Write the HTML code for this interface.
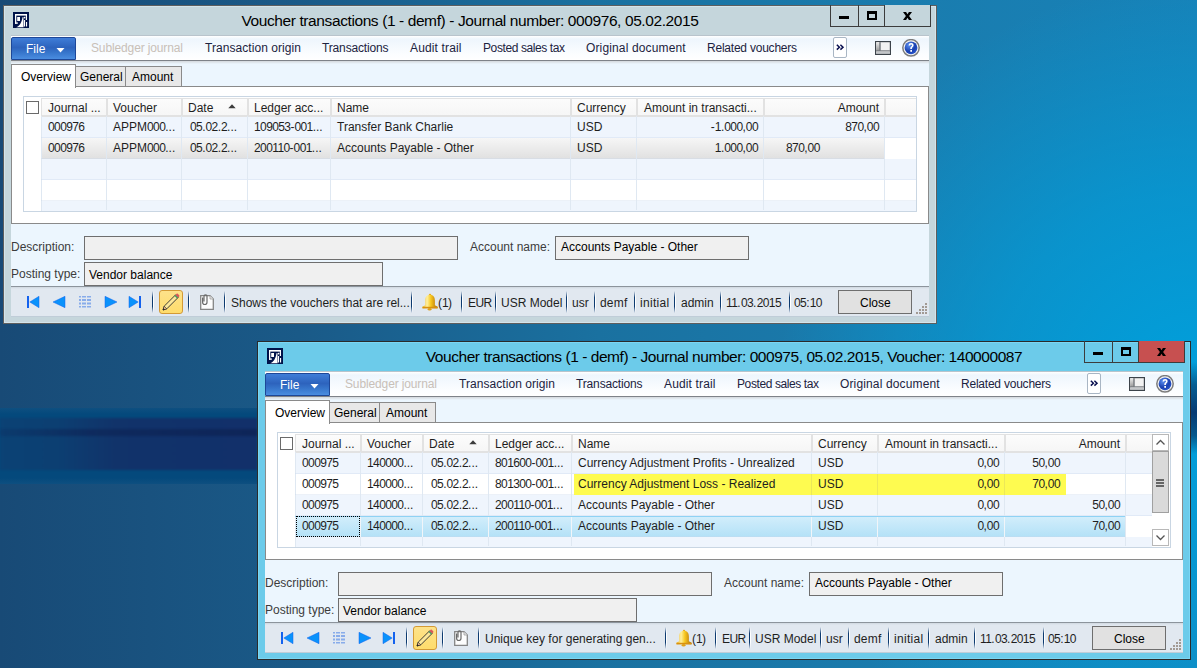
<!DOCTYPE html>
<html><head><meta charset="utf-8"><style>
html,body{margin:0;padding:0;}
body{width:1197px;height:668px;overflow:hidden;position:relative;font-family:"Liberation Sans", sans-serif;
background:radial-gradient(ellipse 420px 420px at 1197px 400px,rgba(0,160,220,1) 0%,rgba(0,160,220,0.6) 50%,rgba(0,160,220,0) 100%),linear-gradient(90deg,#184a76 0%,#1a5a88 25%,#1a71a0 50%,#1a7cae 75%,#1782b8 100%);}
.r{position:absolute;}
.t{position:absolute;white-space:nowrap;}
.d{letter-spacing:-0.6px;}
.win{position:absolute;width:1197px;height:668px;}
</style></head><body>
<div class="r" style="left:0px;top:408px;width:257px;height:76px;background:linear-gradient(#0e4f80 0%,#04497c 8%,#04497c 92%,#0e4f80 100%);"></div><div class="r" style="left:0px;top:418px;width:257px;height:52px;background:linear-gradient(90deg,#0b4275 0%,#0c3f72 22%,#11336a 45%,#12306a 100%);filter:blur(0.8px);"></div><div class="r" style="left:0px;top:429px;width:257px;height:7px;background:linear-gradient(90deg,rgba(12,50,100,0.4) 0%,rgba(14,38,88,0.7) 35%,rgba(14,36,86,0.85) 100%);filter:blur(1px);"></div><div class="r" style="left:1191px;top:362px;width:6px;height:92px;background:linear-gradient(rgba(6,60,110,0) 0%,rgba(6,70,120,0.75) 25%,#063a72 55%,rgba(6,70,120,0.8) 80%,rgba(6,60,110,0) 100%);"></div><div class="win" style="left:0px;top:0px">
<div class="r" style="left:3px;top:5px;width:934px;height:319px;background:#c5d6dc;box-sizing:border-box;border:1px solid #5e5e5e;box-shadow:inset 0 0 0 1px #d4e4ea;"></div>
<svg class="r" style="left:13px;top:12px" width="16" height="16" viewBox="0 0 16 16"><rect width="16" height="16" fill="#00134a"/><g fill="#fff"><rect x="2" y="2" width="12" height="1.6"/><rect x="2" y="2" width="1.3" height="9.8"/><rect x="2" y="10.4" width="2.8" height="1.4"/><rect x="12.8" y="2" width="1.2" height="6"/><rect x="4.2" y="5" width="2.8" height="4"/><path d="M3.2 15.2C6.5 14 8.6 11 9.6 5L10.4 5.4C10.6 9.5 10.6 12.5 10.6 15.2Z"/><circle cx="11.5" cy="5.6" r="0.9"/><rect x="11" y="8" width="1.1" height="6.5"/><rect x="13" y="10" width="1.1" height="4.5"/></g></svg>
<div class="t" style="left:3px;width:934px;text-align:center;top:12.88px;font-size:15.5px;line-height:15.5px;color:#000;letter-spacing:-0.4px;">Voucher transactions (1 - demf) - Journal number: 000976, 05.02.2015</div>
<div class="r" style="left:830px;top:5px;width:29px;height:22px;box-sizing:border-box;border:1px solid #3c3c3c;border-top:none;"></div>
<div class="r" style="left:858px;top:5px;width:27px;height:22px;box-sizing:border-box;border:1px solid #3c3c3c;border-top:none;border-left:none;"></div>
<div class="r" style="left:884px;top:5px;width:47px;height:22px;box-sizing:border-box;border:1px solid #3c3c3c;border-top:none;background:#c5d6dc;"></div>
<div class="r" style="left:839px;top:16px;width:10px;height:3px;background:#000;"></div>
<div class="r" style="left:867px;top:11px;width:10px;height:9px;box-sizing:border-box;border:2px solid #000;border-top-width:3px;"></div>
<svg class="r" style="left:903px;top:12px" width="9" height="8" viewBox="0 0 9 8"><path d="M0 0H3.1L4.5 2.3L5.9 0H9L6.1 4L9 8H5.9L4.5 5.7L3.1 8H0L2.9 4Z" fill="#000"/></svg>
<div class="r" style="left:11px;top:35px;width:918px;height:282px;background:#ecf6fe;"></div>
<div class="r" style="left:11px;top:316px;width:918px;height:1px;background:rgba(90,110,130,0.3);"></div>
<div class="r" style="left:11px;top:35px;width:918px;height:26px;background:linear-gradient(#ffffff 0px,#eef6fd 3px,#fbfdff 18px,#ffffff 100%);border-top:1px solid #b9c4cc;border-bottom:1px solid #7e8288;box-sizing:border-box;"></div>
<div class="r" style="left:11px;top:61px;width:918px;height:3px;background:linear-gradient(#d4d8dc,#ecf6fe);"></div>
<div class="r" style="left:11px;top:37px;width:65px;height:23px;background:linear-gradient(#3f7dd8 0%,#2d63bd 45%,#3776cc 70%,#4a8de0 100%);border:1px solid #1d4798;border-radius:2px 2px 0 0;box-sizing:border-box;"></div>
<div class="t" style="left:26px;top:42.84px;font-size:12px;line-height:12px;color:#fff;">File</div>
<svg class="r" style="left:56px;top:48px" width="9" height="5" viewBox="0 0 9 5"><path d="M0.5 0H8.5L4.5 4.5Z" fill="#fff"/></svg>
<div class="t" style="left:91px;top:41.84px;font-size:12px;line-height:12px;color:#c8c0b8;letter-spacing:-0.13px;">Subledger journal</div>
<div class="t" style="left:205px;top:41.84px;font-size:12px;line-height:12px;color:#1c2340;letter-spacing:0.06px;">Transaction origin</div>
<div class="t" style="left:322px;top:41.84px;font-size:12px;line-height:12px;color:#1c2340;letter-spacing:-0.15px;">Transactions</div>
<div class="t" style="left:410px;top:41.84px;font-size:12px;line-height:12px;color:#1c2340;letter-spacing:0.15px;">Audit trail</div>
<div class="t" style="left:483px;top:41.84px;font-size:12px;line-height:12px;color:#1c2340;letter-spacing:-0.4px;">Posted sales tax</div>
<div class="t" style="left:586px;top:41.84px;font-size:12px;line-height:12px;color:#1c2340;letter-spacing:0.14px;">Original document</div>
<div class="t" style="left:707px;top:41.84px;font-size:12px;line-height:12px;color:#1c2340;letter-spacing:-0.22px;">Related vouchers</div>
<div class="r" style="left:833px;top:37px;width:14px;height:21px;box-sizing:border-box;border:1px solid #a9b6c4;border-radius:2px;background:#fff;"></div>
<svg class="r" style="left:836px;top:44px" width="9" height="7" viewBox="0 0 9 7"><path d="M0.8 0.8L3.4 3.2L0.8 5.6M4.4 0.8L7 3.2L4.4 5.6" fill="none" stroke="#0a1050" stroke-width="1.5"/></svg>
<svg class="r" style="left:875px;top:41px" width="16" height="14" viewBox="0 0 16 14"><defs><linearGradient id="lg1a" x1="0" y1="0" x2="0" y2="1"><stop offset="0" stop-color="#ececec"/><stop offset="1" stop-color="#9a9a9a"/></linearGradient><linearGradient id="lg2a" x1="0" y1="0" x2="0" y2="1"><stop offset="0" stop-color="#d8dadc"/><stop offset="1" stop-color="#a8acb0"/></linearGradient></defs><rect x="0.6" y="0.6" width="14.8" height="12.8" fill="#f2f2f2" stroke="#3c434a" stroke-width="1.2"/><rect x="1.2" y="1.2" width="3.3" height="8.3" fill="url(#lg1a)"/><rect x="4.5" y="1.2" width="1" height="8.3" fill="#3c434a"/><rect x="1.2" y="9.5" width="13.6" height="1" fill="#3c434a"/><rect x="1.2" y="10.5" width="13.6" height="2.3" fill="url(#lg2a)"/></svg>
<svg class="r" style="left:902px;top:39px" width="18" height="18" viewBox="0 0 18 18"><defs><radialGradient id="hga" cx="0.35" cy="0.3" r="0.8"><stop offset="0" stop-color="#5a8ef0"/><stop offset="0.6" stop-color="#1a40b0"/><stop offset="1" stop-color="#2a58d0"/></radialGradient></defs><circle cx="9" cy="8.8" r="8.2" fill="#f4f4f4" stroke="#7c7c7c" stroke-width="1.5"/><circle cx="9" cy="8.8" r="6.4" fill="url(#hga)"/><path d="M6.6 6.6C6.6 4.9 7.7 4.1 9.1 4.1C10.6 4.1 11.6 5 11.6 6.3C11.6 7.8 10.1 8.1 9.9 9.4V10H8.3V9.2C8.4 7.5 10 7.3 10 6.3C10 5.7 9.6 5.4 9.1 5.4C8.5 5.4 8.2 5.8 8.2 6.6Z" fill="#fff"/><rect x="8.3" y="11" width="1.7" height="1.8" fill="#fff"/></svg>
<div class="r" style="left:11px;top:86px;width:918px;height:138px;background:#fff;box-sizing:border-box;border:1px solid #8a8a8a;"></div>
<div class="r" style="left:75px;top:66px;width:51px;height:21px;background:#e8e8e8;box-sizing:border-box;border:1px solid #8a8a8a;"></div>
<div class="r" style="left:125px;top:66px;width:57px;height:21px;background:#e8e8e8;box-sizing:border-box;border:1px solid #8a8a8a;"></div>
<div class="r" style="left:11px;top:64px;width:65px;height:24px;background:#fff;box-sizing:border-box;border:1px solid #8a8a8a;border-bottom:none;"></div>
<div class="t" style="left:21px;top:70.84px;font-size:12px;line-height:12px;color:#000;">Overview</div>
<div class="t" style="left:80px;top:70.84px;font-size:12px;line-height:12px;color:#000;">General</div>
<div class="t" style="left:132px;top:70.84px;font-size:12px;line-height:12px;color:#000;">Amount</div>
<div class="r" style="left:23px;top:96px;width:894px;height:116px;box-sizing:border-box;border:1px solid #c9d6e3;background:#fff;"></div>
<div class="r" style="left:41px;top:98px;width:875px;height:19px;background:linear-gradient(#fcfcfc,#f6f6f6);border-top:1px solid #e2e2e2;border-bottom:2px solid #e2e2e2;box-sizing:border-box;"></div>
<div class="r" style="left:26px;top:101px;width:13px;height:13px;box-sizing:border-box;border:1px solid #6a6a6a;background:#fff;"></div>
<div class="r" style="left:41px;top:117px;width:875px;height:21px;background:#eff5fd"></div>
<div class="r" style="left:41px;top:138px;width:875px;height:21px;background:linear-gradient(#f6f6f6,#e0e0e0)"></div>
<div class="r" style="left:41px;top:159px;width:875px;height:21px;background:#eff5fd"></div>
<div class="r" style="left:41px;top:180px;width:875px;height:21px;background:#fff"></div>
<div class="r" style="left:41px;top:201px;width:875px;height:10px;background:#eff5fd"></div>
<div class="r" style="left:41px;top:116px;width:1px;height:95px;background:#dfe8f2;"></div>
<div class="r" style="left:41px;top:137px;width:875px;height:1px;background:rgba(200,215,235,0.35);"></div>
<div class="r" style="left:41px;top:158px;width:875px;height:1px;background:rgba(200,215,235,0.35);"></div>
<div class="r" style="left:41px;top:179px;width:875px;height:1px;background:rgba(200,215,235,0.35);"></div>
<div class="r" style="left:41px;top:200px;width:875px;height:1px;background:rgba(200,215,235,0.35);"></div>
<div class="r" style="left:884px;top:138px;width:32px;height:21px;background:#fff;"></div>
<div class="r" style="left:106px;top:116px;width:1px;height:94px;background:#dfe8f2;"></div>
<div class="r" style="left:106px;top:98px;width:2px;height:18px;background:#e2e2e2;"></div>
<div class="r" style="left:181px;top:116px;width:1px;height:94px;background:#dfe8f2;"></div>
<div class="r" style="left:181px;top:98px;width:2px;height:18px;background:#e2e2e2;"></div>
<div class="r" style="left:247px;top:116px;width:1px;height:94px;background:#dfe8f2;"></div>
<div class="r" style="left:247px;top:98px;width:2px;height:18px;background:#e2e2e2;"></div>
<div class="r" style="left:330px;top:116px;width:1px;height:94px;background:#dfe8f2;"></div>
<div class="r" style="left:330px;top:98px;width:2px;height:18px;background:#e2e2e2;"></div>
<div class="r" style="left:570px;top:116px;width:1px;height:94px;background:#dfe8f2;"></div>
<div class="r" style="left:570px;top:98px;width:2px;height:18px;background:#e2e2e2;"></div>
<div class="r" style="left:636px;top:116px;width:1px;height:94px;background:#dfe8f2;"></div>
<div class="r" style="left:636px;top:98px;width:2px;height:18px;background:#e2e2e2;"></div>
<div class="r" style="left:763px;top:116px;width:1px;height:94px;background:#dfe8f2;"></div>
<div class="r" style="left:763px;top:98px;width:2px;height:18px;background:#e2e2e2;"></div>
<div class="r" style="left:884px;top:116px;width:1px;height:94px;background:#dfe8f2;"></div>
<div class="r" style="left:884px;top:98px;width:2px;height:18px;background:#e2e2e2;"></div>
<div class="r" style="left:41px;top:98px;width:1px;height:18px;background:#e2e2e2;"></div>
<div class="t" style="left:48px;top:101.84px;font-size:12px;line-height:12px;color:#1e1e1e;">Journal ...</div>
<div class="t" style="left:113px;top:101.84px;font-size:12px;line-height:12px;color:#1e1e1e;">Voucher</div>
<div class="t" style="left:188px;top:101.84px;font-size:12px;line-height:12px;color:#1e1e1e;">Date</div>
<div class="t" style="left:254px;top:101.84px;font-size:12px;line-height:12px;color:#1e1e1e;">Ledger acc...</div>
<div class="t" style="left:337px;top:101.84px;font-size:12px;line-height:12px;color:#1e1e1e;">Name</div>
<div class="t" style="left:577px;top:101.84px;font-size:12px;line-height:12px;color:#1e1e1e;">Currency</div>
<div class="t" style="left:644px;top:101.84px;font-size:12px;line-height:12px;color:#1e1e1e;">Amount in transacti...</div>
<div class="t" style="left:479px;width:400px;text-align:right;top:101.84px;font-size:12px;line-height:12px;color:#1e1e1e;">Amount</div>
<svg class="r" style="left:228px;top:104px" width="8" height="5" viewBox="0 0 8 5"><path d="M0.3 4.3L4 0.3L7.7 4.3Z" fill="#3c3c3c"/></svg>
<div class="t" style="left:48px;top:120.84px;font-size:12px;line-height:12px;color:#1e1e1e;"><span class="d">000976</span></div>
<div class="t" style="left:113px;top:120.84px;font-size:12px;line-height:12px;color:#1e1e1e;">APPM<span class="d">000</span>...</div>
<div class="t" style="left:190px;top:120.84px;font-size:12px;line-height:12px;color:#1e1e1e;"><span class="d">05</span>.<span class="d">02</span>.<span class="d">2</span>...</div>
<div class="t" style="left:254px;top:120.84px;font-size:12px;line-height:12px;color:#1e1e1e;"><span class="d">109053</span>-<span class="d">001</span>...</div>
<div class="t" style="left:337px;top:120.84px;font-size:12px;line-height:12px;color:#1e1e1e;">Transfer Bank Charlie</div>
<div class="t" style="left:577px;top:120.84px;font-size:12px;line-height:12px;color:#1e1e1e;">USD</div>
<div class="t" style="left:358px;width:400px;text-align:right;top:120.84px;font-size:12px;line-height:12px;color:#1e1e1e;">-<span class="d">1</span>.<span class="d">000</span>,<span class="d">00</span></div>
<div class="t" style="left:479px;width:400px;text-align:right;top:120.84px;font-size:12px;line-height:12px;color:#1e1e1e;"><span class="d">870</span>,<span class="d">00</span></div>
<div class="t" style="left:48px;top:141.84px;font-size:12px;line-height:12px;color:#1e1e1e;"><span class="d">000976</span></div>
<div class="t" style="left:113px;top:141.84px;font-size:12px;line-height:12px;color:#1e1e1e;">APPM<span class="d">000</span>...</div>
<div class="t" style="left:190px;top:141.84px;font-size:12px;line-height:12px;color:#1e1e1e;"><span class="d">05</span>.<span class="d">02</span>.<span class="d">2</span>...</div>
<div class="t" style="left:254px;top:141.84px;font-size:12px;line-height:12px;color:#1e1e1e;"><span class="d">200110</span>-<span class="d">001</span>...</div>
<div class="t" style="left:337px;top:141.84px;font-size:12px;line-height:12px;color:#1e1e1e;">Accounts Payable - Other</div>
<div class="t" style="left:577px;top:141.84px;font-size:12px;line-height:12px;color:#1e1e1e;">USD</div>
<div class="t" style="left:358px;width:400px;text-align:right;top:141.84px;font-size:12px;line-height:12px;color:#1e1e1e;"><span class="d">1</span>.<span class="d">000</span>,<span class="d">00</span></div>
<div class="t" style="left:786px;top:141.84px;font-size:12px;line-height:12px;color:#1e1e1e;"><span class="d">870</span>,<span class="d">00</span></div>
<div class="t" style="left:11px;top:240.84px;font-size:12px;line-height:12px;color:#3c3c3c;">Description:</div>
<div class="r" style="left:84px;top:236px;width:374px;height:24px;box-sizing:border-box;border:1px solid #6e6e6e;background:#f0f0f0;"></div>
<div class="t" style="left:11px;top:267.84px;font-size:12px;line-height:12px;color:#3c3c3c;">Posting type:</div>
<div class="r" style="left:84px;top:262px;width:299px;height:24px;box-sizing:border-box;border:1px solid #6e6e6e;background:#f0f0f0;"></div>
<div class="t" style="left:89px;top:268.84px;font-size:12px;line-height:12px;color:#000;">Vendor balance</div>
<div class="t" style="left:470px;top:240.84px;font-size:12px;line-height:12px;color:#3c3c3c;">Account name:</div>
<div class="r" style="left:555px;top:236px;width:194px;height:24px;box-sizing:border-box;border:1px solid #6e6e6e;background:#f0f0f0;"></div>
<div class="t" style="left:561px;top:240.84px;font-size:12px;line-height:12px;color:#000;">Accounts Payable - Other</div>
<div class="r" style="left:11px;top:286px;width:918px;height:30px;background:linear-gradient(#8c949c 0,#8c949c 1px,#d0d8e0 1px,#e1e8f0 3px,#e1e8f0 100%);"></div>
<svg class="r" style="left:27px;top:296px" width="115" height="13" viewBox="0 0 115 13"><rect x="0" y="0" width="2" height="12" fill="#1462ee"/><path d="M2.8 6L12 0.3V11.7Z" fill="#0a92fb" stroke="#1462ee" stroke-width="0.5"/><path d="M26 6L38 0.3V11.7Z" fill="#0a92fb" stroke="#1462ee" stroke-width="0.5"/><g fill="#88acea"><rect x="52" y="0" width="2" height="1.5"/><rect x="55" y="0" width="4" height="1.5"/><rect x="60" y="0" width="4" height="1.5"/><rect x="52" y="3" width="2" height="2"/><rect x="55" y="3" width="4" height="2"/><rect x="60" y="3" width="4" height="2"/><rect x="52" y="6.5" width="2" height="2"/><rect x="55" y="6.5" width="4" height="2"/><rect x="60" y="6.5" width="4" height="2"/><rect x="52" y="10" width="2" height="1.5"/><rect x="55" y="10" width="4" height="1.5"/><rect x="60" y="10" width="4" height="1.5"/></g><path d="M78 0.3L90 6L78 11.7Z" fill="#0a92fb" stroke="#1462ee" stroke-width="0.5"/><path d="M102 0.3L111.2 6L102 11.7Z" fill="#0a92fb" stroke="#1462ee" stroke-width="0.5"/><rect x="112" y="0" width="2" height="12" fill="#1462ee"/></svg>
<div class="r" style="left:152px;top:291px;width:1px;height:22px;background:linear-gradient(#e1e8f0,#0c3a70 30%,#0c3a70 70%,#e1e8f0);"></div>
<div class="r" style="left:153px;top:291px;width:1px;height:22px;background:linear-gradient(#e1e8f0,#ffffff 30%,#ffffff 70%,#e1e8f0);"></div>
<div class="r" style="left:188px;top:291px;width:1px;height:22px;background:linear-gradient(#e1e8f0,#0c3a70 30%,#0c3a70 70%,#e1e8f0);"></div>
<div class="r" style="left:189px;top:291px;width:1px;height:22px;background:linear-gradient(#e1e8f0,#ffffff 30%,#ffffff 70%,#e1e8f0);"></div>
<div class="r" style="left:224px;top:291px;width:1px;height:22px;background:linear-gradient(#e1e8f0,#0c3a70 30%,#0c3a70 70%,#e1e8f0);"></div>
<div class="r" style="left:225px;top:291px;width:1px;height:22px;background:linear-gradient(#e1e8f0,#ffffff 30%,#ffffff 70%,#e1e8f0);"></div>
<div class="r" style="left:411px;top:291px;width:1px;height:22px;background:linear-gradient(#e1e8f0,#0c3a70 30%,#0c3a70 70%,#e1e8f0);"></div>
<div class="r" style="left:412px;top:291px;width:1px;height:22px;background:linear-gradient(#e1e8f0,#ffffff 30%,#ffffff 70%,#e1e8f0);"></div>
<div class="r" style="left:461px;top:291px;width:1px;height:22px;background:linear-gradient(#e1e8f0,#0c3a70 30%,#0c3a70 70%,#e1e8f0);"></div>
<div class="r" style="left:462px;top:291px;width:1px;height:22px;background:linear-gradient(#e1e8f0,#ffffff 30%,#ffffff 70%,#e1e8f0);"></div>
<div class="r" style="left:494.5px;top:291px;width:1px;height:22px;background:linear-gradient(#e1e8f0,#0c3a70 30%,#0c3a70 70%,#e1e8f0);"></div>
<div class="r" style="left:495.5px;top:291px;width:1px;height:22px;background:linear-gradient(#e1e8f0,#ffffff 30%,#ffffff 70%,#e1e8f0);"></div>
<div class="r" style="left:565.5px;top:291px;width:1px;height:22px;background:linear-gradient(#e1e8f0,#0c3a70 30%,#0c3a70 70%,#e1e8f0);"></div>
<div class="r" style="left:566.5px;top:291px;width:1px;height:22px;background:linear-gradient(#e1e8f0,#ffffff 30%,#ffffff 70%,#e1e8f0);"></div>
<div class="r" style="left:593.5px;top:291px;width:1px;height:22px;background:linear-gradient(#e1e8f0,#0c3a70 30%,#0c3a70 70%,#e1e8f0);"></div>
<div class="r" style="left:594.5px;top:291px;width:1px;height:22px;background:linear-gradient(#e1e8f0,#ffffff 30%,#ffffff 70%,#e1e8f0);"></div>
<div class="r" style="left:633.5px;top:291px;width:1px;height:22px;background:linear-gradient(#e1e8f0,#0c3a70 30%,#0c3a70 70%,#e1e8f0);"></div>
<div class="r" style="left:634.5px;top:291px;width:1px;height:22px;background:linear-gradient(#e1e8f0,#ffffff 30%,#ffffff 70%,#e1e8f0);"></div>
<div class="r" style="left:673.5px;top:291px;width:1px;height:22px;background:linear-gradient(#e1e8f0,#0c3a70 30%,#0c3a70 70%,#e1e8f0);"></div>
<div class="r" style="left:674.5px;top:291px;width:1px;height:22px;background:linear-gradient(#e1e8f0,#ffffff 30%,#ffffff 70%,#e1e8f0);"></div>
<div class="r" style="left:719.5px;top:291px;width:1px;height:22px;background:linear-gradient(#e1e8f0,#0c3a70 30%,#0c3a70 70%,#e1e8f0);"></div>
<div class="r" style="left:720.5px;top:291px;width:1px;height:22px;background:linear-gradient(#e1e8f0,#ffffff 30%,#ffffff 70%,#e1e8f0);"></div>
<div class="r" style="left:788.5px;top:291px;width:1px;height:22px;background:linear-gradient(#e1e8f0,#0c3a70 30%,#0c3a70 70%,#e1e8f0);"></div>
<div class="r" style="left:789.5px;top:291px;width:1px;height:22px;background:linear-gradient(#e1e8f0,#ffffff 30%,#ffffff 70%,#e1e8f0);"></div>
<div class="r" style="left:159px;top:290px;width:24px;height:24px;box-sizing:border-box;border:1.5px solid #d39a35;border-radius:3px;background:linear-gradient(#fde28a,#fedc6c);"></div>
<svg class="r" style="left:159px;top:290px" width="24" height="24" viewBox="0 0 24 24"><path d="M4 20L5.2 16.2L16.5 4.9L19.1 7.5L7.8 18.8Z" fill="#fbe79a" stroke="#2a2a2a" stroke-width="0.9"/><path d="M4 20L5.2 16.2L7.8 18.8Z" fill="#f0c090" stroke="#2a2a2a" stroke-width="0.6"/><path d="M4 20L4.6 18.2L5.8 19.4Z" fill="#111"/><path d="M15.5 5.9L18.1 8.5L19.1 7.5L16.5 4.9Z" fill="#40a060"/><path d="M16.5 4.9L19.1 7.5L20.2 6.4C20.5 6 20.5 5.5 20.1 5.1L18.9 3.9C18.5 3.5 18 3.5 17.6 3.8Z" fill="#d85a5a"/></svg>
<svg class="r" style="left:199px;top:293px" width="16" height="18" viewBox="0 0 16 18"><path d="M1.7 2.7H11L14.3 6V16.3H1.7Z" fill="#fdfdfd" stroke="#858585" stroke-width="1.3"/><path d="M11 2.7V6H14.3" fill="#e8e8e8" stroke="#a0a0a0" stroke-width="0.8"/><path d="M3.6 4.5V9.3A2.2 2.2 0 0 0 8 9.3V3.3A1.5 1.5 0 0 0 5 3.3V8.5" fill="none" stroke="#6a6a6a" stroke-width="1.2"/></svg>
<div class="t" style="left:231px;top:296.84px;font-size:12px;line-height:12px;color:#1e1e1e;">Shows the vouchers that are rel...</div>
<svg class="r" style="left:421px;top:293px" width="18" height="18" viewBox="0 0 18 18"><defs><linearGradient id="bg1a" x1="0" y1="0" x2="1" y2="0"><stop offset="0" stop-color="#f0b010"/><stop offset="0.3" stop-color="#fff0a0"/><stop offset="0.55" stop-color="#f8c820"/><stop offset="1" stop-color="#b06a08"/></linearGradient></defs><circle cx="9" cy="1.9" r="1.1" fill="#e0a010"/><path d="M9 1.8C5.6 1.8 4.2 4.2 4.2 7.8V12.2L1.5 13.8V15.3H16.6V13.8L13.9 12.2V7.8C13.9 4.2 12.4 1.8 9 1.8Z" fill="url(#bg1a)"/><rect x="1.5" y="13.8" width="15.1" height="1.6" fill="#d89010"/><ellipse cx="8.6" cy="16.3" rx="1.9" ry="1.2" fill="#e0a018"/></svg>
<div class="t" style="left:438px;top:296.84px;font-size:12px;line-height:12px;color:#1e1e1e;">(<span class="d">1</span>)</div>
<div class="t" style="left:468px;top:296.84px;font-size:12px;line-height:12px;color:#1e1e1e;letter-spacing:-0.6px;">EUR</div>
<div class="t" style="left:501px;top:296.84px;font-size:12px;line-height:12px;color:#1e1e1e;letter-spacing:0px;">USR Model</div>
<div class="t" style="left:572px;top:296.84px;font-size:12px;line-height:12px;color:#1e1e1e;letter-spacing:0px;">usr</div>
<div class="t" style="left:600px;top:296.84px;font-size:12px;line-height:12px;color:#1e1e1e;letter-spacing:0.2px;">demf</div>
<div class="t" style="left:640px;top:296.84px;font-size:12px;line-height:12px;color:#1e1e1e;letter-spacing:0.3px;">initial</div>
<div class="t" style="left:681px;top:296.84px;font-size:12px;line-height:12px;color:#1e1e1e;letter-spacing:0px;">admin</div>
<div class="t" style="left:726px;top:296.84px;font-size:12px;line-height:12px;color:#1e1e1e;letter-spacing:0.3px;"><span class="d">11</span>.<span class="d">03</span>.<span class="d">2015</span></div>
<div class="t" style="left:794px;top:296.84px;font-size:12px;line-height:12px;color:#1e1e1e;letter-spacing:0.3px;"><span class="d">05</span>:<span class="d">10</span></div>
<div class="r" style="left:838px;top:290px;width:74px;height:24px;box-sizing:border-box;border:1px solid #6e6e6e;background:#e1e1e1;"></div>
<div class="t" style="left:860px;top:296.84px;font-size:12px;line-height:12px;color:#000;">Close</div>
<svg class="r" style="left:916px;top:303px" width="11" height="11" viewBox="0 0 11 11"><g fill="#a29a94"><rect x="9" y="0" width="2" height="2"/><rect x="6" y="3" width="2" height="2"/><rect x="9" y="3" width="2" height="2"/><rect x="3" y="6" width="2" height="2"/><rect x="6" y="6" width="2" height="2"/><rect x="9" y="6" width="2" height="2"/><rect x="0" y="9" width="2" height="2"/><rect x="3" y="9" width="2" height="2"/><rect x="6" y="9" width="2" height="2"/><rect x="9" y="9" width="2" height="2"/></g></svg>
</div><div class="win" style="left:254px;top:336px">
<div class="r" style="left:3px;top:5px;width:934px;height:319px;background:#6ccbea;box-sizing:border-box;border:1px solid #2a2a2a;box-shadow:inset 0 0 0 1px #7ad6f4;"></div>
<svg class="r" style="left:13px;top:12px" width="16" height="16" viewBox="0 0 16 16"><rect width="16" height="16" fill="#00134a"/><g fill="#fff"><rect x="2" y="2" width="12" height="1.6"/><rect x="2" y="2" width="1.3" height="9.8"/><rect x="2" y="10.4" width="2.8" height="1.4"/><rect x="12.8" y="2" width="1.2" height="6"/><rect x="4.2" y="5" width="2.8" height="4"/><path d="M3.2 15.2C6.5 14 8.6 11 9.6 5L10.4 5.4C10.6 9.5 10.6 12.5 10.6 15.2Z"/><circle cx="11.5" cy="5.6" r="0.9"/><rect x="11" y="8" width="1.1" height="6.5"/><rect x="13" y="10" width="1.1" height="4.5"/></g></svg>
<div class="t" style="left:3px;width:934px;text-align:center;top:12.88px;font-size:15.5px;line-height:15.5px;color:#000;letter-spacing:-0.45px;">Voucher transactions (1 - demf) - Journal number: 000975, 05.02.2015, Voucher: 140000087</div>
<div class="r" style="left:830px;top:5px;width:29px;height:22px;box-sizing:border-box;border:1px solid #3c3c3c;border-top:none;"></div>
<div class="r" style="left:858px;top:5px;width:27px;height:22px;box-sizing:border-box;border:1px solid #3c3c3c;border-top:none;border-left:none;"></div>
<div class="r" style="left:884px;top:5px;width:47px;height:22px;box-sizing:border-box;border:1px solid #3c3c3c;border-top:none;background:#c75050;"></div>
<div class="r" style="left:839px;top:16px;width:10px;height:3px;background:#000;"></div>
<div class="r" style="left:867px;top:11px;width:10px;height:9px;box-sizing:border-box;border:2px solid #000;border-top-width:3px;"></div>
<svg class="r" style="left:903px;top:12px" width="9" height="8" viewBox="0 0 9 8"><path d="M0 0H3.1L4.5 2.3L5.9 0H9L6.1 4L9 8H5.9L4.5 5.7L3.1 8H0L2.9 4Z" fill="#000"/></svg>
<div class="r" style="left:11px;top:35px;width:918px;height:282px;background:#ecf6fe;"></div>
<div class="r" style="left:11px;top:316px;width:918px;height:1px;background:rgba(90,110,130,0.3);"></div>
<div class="r" style="left:11px;top:35px;width:918px;height:26px;background:linear-gradient(#ffffff 0px,#eef6fd 3px,#fbfdff 18px,#ffffff 100%);border-top:1px solid #b9c4cc;border-bottom:1px solid #7e8288;box-sizing:border-box;"></div>
<div class="r" style="left:11px;top:61px;width:918px;height:3px;background:linear-gradient(#d4d8dc,#ecf6fe);"></div>
<div class="r" style="left:11px;top:37px;width:65px;height:23px;background:linear-gradient(#3f7dd8 0%,#2d63bd 45%,#3776cc 70%,#4a8de0 100%);border:1px solid #1d4798;border-radius:2px 2px 0 0;box-sizing:border-box;"></div>
<div class="t" style="left:26px;top:42.84px;font-size:12px;line-height:12px;color:#fff;">File</div>
<svg class="r" style="left:56px;top:48px" width="9" height="5" viewBox="0 0 9 5"><path d="M0.5 0H8.5L4.5 4.5Z" fill="#fff"/></svg>
<div class="t" style="left:91px;top:41.84px;font-size:12px;line-height:12px;color:#c8c0b8;letter-spacing:-0.13px;">Subledger journal</div>
<div class="t" style="left:205px;top:41.84px;font-size:12px;line-height:12px;color:#1c2340;letter-spacing:0.06px;">Transaction origin</div>
<div class="t" style="left:322px;top:41.84px;font-size:12px;line-height:12px;color:#1c2340;letter-spacing:-0.15px;">Transactions</div>
<div class="t" style="left:410px;top:41.84px;font-size:12px;line-height:12px;color:#1c2340;letter-spacing:0.15px;">Audit trail</div>
<div class="t" style="left:483px;top:41.84px;font-size:12px;line-height:12px;color:#1c2340;letter-spacing:-0.4px;">Posted sales tax</div>
<div class="t" style="left:586px;top:41.84px;font-size:12px;line-height:12px;color:#1c2340;letter-spacing:0.14px;">Original document</div>
<div class="t" style="left:707px;top:41.84px;font-size:12px;line-height:12px;color:#1c2340;letter-spacing:-0.22px;">Related vouchers</div>
<div class="r" style="left:833px;top:37px;width:14px;height:21px;box-sizing:border-box;border:1px solid #a9b6c4;border-radius:2px;background:#fff;"></div>
<svg class="r" style="left:836px;top:44px" width="9" height="7" viewBox="0 0 9 7"><path d="M0.8 0.8L3.4 3.2L0.8 5.6M4.4 0.8L7 3.2L4.4 5.6" fill="none" stroke="#0a1050" stroke-width="1.5"/></svg>
<svg class="r" style="left:875px;top:41px" width="16" height="14" viewBox="0 0 16 14"><defs><linearGradient id="lg1b" x1="0" y1="0" x2="0" y2="1"><stop offset="0" stop-color="#ececec"/><stop offset="1" stop-color="#9a9a9a"/></linearGradient><linearGradient id="lg2b" x1="0" y1="0" x2="0" y2="1"><stop offset="0" stop-color="#d8dadc"/><stop offset="1" stop-color="#a8acb0"/></linearGradient></defs><rect x="0.6" y="0.6" width="14.8" height="12.8" fill="#f2f2f2" stroke="#3c434a" stroke-width="1.2"/><rect x="1.2" y="1.2" width="3.3" height="8.3" fill="url(#lg1b)"/><rect x="4.5" y="1.2" width="1" height="8.3" fill="#3c434a"/><rect x="1.2" y="9.5" width="13.6" height="1" fill="#3c434a"/><rect x="1.2" y="10.5" width="13.6" height="2.3" fill="url(#lg2b)"/></svg>
<svg class="r" style="left:902px;top:39px" width="18" height="18" viewBox="0 0 18 18"><defs><radialGradient id="hgb" cx="0.35" cy="0.3" r="0.8"><stop offset="0" stop-color="#5a8ef0"/><stop offset="0.6" stop-color="#1a40b0"/><stop offset="1" stop-color="#2a58d0"/></radialGradient></defs><circle cx="9" cy="8.8" r="8.2" fill="#f4f4f4" stroke="#7c7c7c" stroke-width="1.5"/><circle cx="9" cy="8.8" r="6.4" fill="url(#hgb)"/><path d="M6.6 6.6C6.6 4.9 7.7 4.1 9.1 4.1C10.6 4.1 11.6 5 11.6 6.3C11.6 7.8 10.1 8.1 9.9 9.4V10H8.3V9.2C8.4 7.5 10 7.3 10 6.3C10 5.7 9.6 5.4 9.1 5.4C8.5 5.4 8.2 5.8 8.2 6.6Z" fill="#fff"/><rect x="8.3" y="11" width="1.7" height="1.8" fill="#fff"/></svg>
<div class="r" style="left:11px;top:86px;width:918px;height:138px;background:#fff;box-sizing:border-box;border:1px solid #8a8a8a;"></div>
<div class="r" style="left:75px;top:66px;width:51px;height:21px;background:#e8e8e8;box-sizing:border-box;border:1px solid #8a8a8a;"></div>
<div class="r" style="left:125px;top:66px;width:57px;height:21px;background:#e8e8e8;box-sizing:border-box;border:1px solid #8a8a8a;"></div>
<div class="r" style="left:11px;top:64px;width:65px;height:24px;background:#fff;box-sizing:border-box;border:1px solid #8a8a8a;border-bottom:none;"></div>
<div class="t" style="left:21px;top:70.84px;font-size:12px;line-height:12px;color:#000;">Overview</div>
<div class="t" style="left:80px;top:70.84px;font-size:12px;line-height:12px;color:#000;">General</div>
<div class="t" style="left:132px;top:70.84px;font-size:12px;line-height:12px;color:#000;">Amount</div>
<div class="r" style="left:23px;top:96px;width:894px;height:116px;box-sizing:border-box;border:1px solid #c9d6e3;background:#fff;"></div>
<div class="r" style="left:41px;top:98px;width:857px;height:19px;background:linear-gradient(#fcfcfc,#f6f6f6);border-top:1px solid #e2e2e2;border-bottom:2px solid #e2e2e2;box-sizing:border-box;"></div>
<div class="r" style="left:26px;top:101px;width:13px;height:13px;box-sizing:border-box;border:1px solid #6a6a6a;background:#fff;"></div>
<div class="r" style="left:41px;top:117px;width:857px;height:21px;background:#eff5fd"></div>
<div class="r" style="left:41px;top:138px;width:857px;height:21px;background:#fff"></div>
<div class="r" style="left:41px;top:159px;width:857px;height:21px;background:#eff5fd"></div>
<div class="r" style="left:41px;top:180px;width:857px;height:21px;background:linear-gradient(#d3eefb,#b3e1f7)"></div>
<div class="r" style="left:41px;top:201px;width:857px;height:10px;background:#eff5fd"></div>
<div class="r" style="left:41px;top:116px;width:1px;height:95px;background:#dfe8f2;"></div>
<div class="r" style="left:41px;top:137px;width:857px;height:1px;background:rgba(200,215,235,0.35);"></div>
<div class="r" style="left:41px;top:158px;width:857px;height:1px;background:rgba(200,215,235,0.35);"></div>
<div class="r" style="left:41px;top:179px;width:857px;height:1px;background:rgba(200,215,235,0.35);"></div>
<div class="r" style="left:41px;top:200px;width:857px;height:1px;background:rgba(200,215,235,0.35);"></div>
<div class="r" style="left:320px;top:138px;width:492px;height:21px;background:#fefb50;"></div>
<div class="r" style="left:871px;top:180px;width:27px;height:21px;background:#fff;"></div>
<div class="r" style="left:106px;top:116px;width:1px;height:94px;background:#dfe8f2;"></div>
<div class="r" style="left:106px;top:98px;width:2px;height:18px;background:#e2e2e2;"></div>
<div class="r" style="left:168px;top:116px;width:1px;height:94px;background:#dfe8f2;"></div>
<div class="r" style="left:168px;top:98px;width:2px;height:18px;background:#e2e2e2;"></div>
<div class="r" style="left:234px;top:116px;width:1px;height:94px;background:#dfe8f2;"></div>
<div class="r" style="left:234px;top:98px;width:2px;height:18px;background:#e2e2e2;"></div>
<div class="r" style="left:317px;top:116px;width:1px;height:94px;background:#dfe8f2;"></div>
<div class="r" style="left:317px;top:98px;width:2px;height:18px;background:#e2e2e2;"></div>
<div class="r" style="left:557px;top:116px;width:1px;height:94px;background:#dfe8f2;"></div>
<div class="r" style="left:557px;top:98px;width:2px;height:18px;background:#e2e2e2;"></div>
<div class="r" style="left:623px;top:116px;width:1px;height:94px;background:#dfe8f2;"></div>
<div class="r" style="left:623px;top:98px;width:2px;height:18px;background:#e2e2e2;"></div>
<div class="r" style="left:750px;top:116px;width:1px;height:94px;background:#dfe8f2;"></div>
<div class="r" style="left:750px;top:98px;width:2px;height:18px;background:#e2e2e2;"></div>
<div class="r" style="left:871px;top:116px;width:1px;height:94px;background:#dfe8f2;"></div>
<div class="r" style="left:871px;top:98px;width:2px;height:18px;background:#e2e2e2;"></div>
<div class="r" style="left:41px;top:98px;width:1px;height:18px;background:#e2e2e2;"></div>
<div class="r" style="left:898px;top:98px;width:17px;height:112px;background:#fff;"></div>
<div class="r" style="left:898px;top:98px;width:17px;height:17px;box-sizing:border-box;border:1px solid #b8b8b8;background:#fff;"></div>
<div class="r" style="left:898px;top:115px;width:17px;height:62px;box-sizing:border-box;border:1px solid #a0a0a0;background:#dadada;"></div>
<div class="r" style="left:898px;top:193px;width:17px;height:17px;box-sizing:border-box;border:1px solid #b8b8b8;background:#fff;"></div>
<svg class="r" style="left:902px;top:103px" width="9" height="6" viewBox="0 0 9 6"><path d="M0.5 5.5L4.5 1.5L8.5 5.5" fill="none" stroke="#555" stroke-width="1.3"/></svg>
<svg class="r" style="left:902px;top:199px" width="9" height="6" viewBox="0 0 9 6"><path d="M0.5 0.5L4.5 4.5L8.5 0.5" fill="none" stroke="#555" stroke-width="1.3"/></svg>
<div class="r" style="left:902px;top:143px;width:8px;height:2px;background:#666;"></div>
<div class="r" style="left:902px;top:146px;width:8px;height:2px;background:#666;"></div>
<div class="r" style="left:902px;top:149px;width:8px;height:2px;background:#666;"></div>
<div class="r" style="left:557px;top:138px;width:1px;height:21px;background:#ece858;"></div>
<div class="r" style="left:623px;top:138px;width:1px;height:21px;background:#ece858;"></div>
<div class="r" style="left:750px;top:138px;width:1px;height:21px;background:#ece858;"></div>
<div class="r" style="left:106px;top:180px;width:1px;height:21px;background:rgba(255,255,255,0.55);"></div>
<div class="r" style="left:168px;top:180px;width:1px;height:21px;background:rgba(255,255,255,0.55);"></div>
<div class="r" style="left:234px;top:180px;width:1px;height:21px;background:rgba(255,255,255,0.55);"></div>
<div class="r" style="left:317px;top:180px;width:1px;height:21px;background:rgba(255,255,255,0.55);"></div>
<div class="r" style="left:557px;top:180px;width:1px;height:21px;background:rgba(255,255,255,0.55);"></div>
<div class="r" style="left:623px;top:180px;width:1px;height:21px;background:rgba(255,255,255,0.55);"></div>
<div class="r" style="left:750px;top:180px;width:1px;height:21px;background:rgba(255,255,255,0.55);"></div>
<div class="r" style="left:41px;top:180px;width:830px;height:1px;background:#8fd2f4;"></div>
<div class="r" style="left:42px;top:180px;width:64px;height:21px;box-sizing:border-box;border:1px dotted #000;"></div>
<div class="t" style="left:48px;top:101.84px;font-size:12px;line-height:12px;color:#1e1e1e;">Journal ...</div>
<div class="t" style="left:113px;top:101.84px;font-size:12px;line-height:12px;color:#1e1e1e;">Voucher</div>
<div class="t" style="left:175px;top:101.84px;font-size:12px;line-height:12px;color:#1e1e1e;">Date</div>
<div class="t" style="left:241px;top:101.84px;font-size:12px;line-height:12px;color:#1e1e1e;">Ledger acc...</div>
<div class="t" style="left:324px;top:101.84px;font-size:12px;line-height:12px;color:#1e1e1e;">Name</div>
<div class="t" style="left:564px;top:101.84px;font-size:12px;line-height:12px;color:#1e1e1e;">Currency</div>
<div class="t" style="left:631px;top:101.84px;font-size:12px;line-height:12px;color:#1e1e1e;">Amount in transacti...</div>
<div class="t" style="left:466px;width:400px;text-align:right;top:101.84px;font-size:12px;line-height:12px;color:#1e1e1e;">Amount</div>
<svg class="r" style="left:215px;top:104px" width="8" height="5" viewBox="0 0 8 5"><path d="M0.3 4.3L4 0.3L7.7 4.3Z" fill="#3c3c3c"/></svg>
<div class="t" style="left:48px;top:120.84px;font-size:12px;line-height:12px;color:#1e1e1e;"><span class="d">000975</span></div>
<div class="t" style="left:113px;top:120.84px;font-size:12px;line-height:12px;color:#1e1e1e;"><span class="d">140000</span>...</div>
<div class="t" style="left:177px;top:120.84px;font-size:12px;line-height:12px;color:#1e1e1e;"><span class="d">05</span>.<span class="d">02</span>.<span class="d">2</span>...</div>
<div class="t" style="left:241px;top:120.84px;font-size:12px;line-height:12px;color:#1e1e1e;"><span class="d">801600</span>-<span class="d">001</span>...</div>
<div class="t" style="left:324px;top:120.84px;font-size:12px;line-height:12px;color:#1e1e1e;">Currency Adjustment Profits - Unrealized</div>
<div class="t" style="left:564px;top:120.84px;font-size:12px;line-height:12px;color:#1e1e1e;">USD</div>
<div class="t" style="left:345px;width:400px;text-align:right;top:120.84px;font-size:12px;line-height:12px;color:#1e1e1e;"><span class="d">0</span>,<span class="d">00</span></div>
<div class="t" style="left:48px;top:141.84px;font-size:12px;line-height:12px;color:#1e1e1e;"><span class="d">000975</span></div>
<div class="t" style="left:113px;top:141.84px;font-size:12px;line-height:12px;color:#1e1e1e;"><span class="d">140000</span>...</div>
<div class="t" style="left:177px;top:141.84px;font-size:12px;line-height:12px;color:#1e1e1e;"><span class="d">05</span>.<span class="d">02</span>.<span class="d">2</span>...</div>
<div class="t" style="left:241px;top:141.84px;font-size:12px;line-height:12px;color:#1e1e1e;"><span class="d">801300</span>-<span class="d">001</span>...</div>
<div class="t" style="left:324px;top:141.84px;font-size:12px;line-height:12px;color:#1e1e1e;">Currency Adjustment Loss - Realized</div>
<div class="t" style="left:564px;top:141.84px;font-size:12px;line-height:12px;color:#1e1e1e;">USD</div>
<div class="t" style="left:345px;width:400px;text-align:right;top:141.84px;font-size:12px;line-height:12px;color:#1e1e1e;"><span class="d">0</span>,<span class="d">00</span></div>
<div class="t" style="left:48px;top:162.84px;font-size:12px;line-height:12px;color:#1e1e1e;"><span class="d">000975</span></div>
<div class="t" style="left:113px;top:162.84px;font-size:12px;line-height:12px;color:#1e1e1e;"><span class="d">140000</span>...</div>
<div class="t" style="left:177px;top:162.84px;font-size:12px;line-height:12px;color:#1e1e1e;"><span class="d">05</span>.<span class="d">02</span>.<span class="d">2</span>...</div>
<div class="t" style="left:241px;top:162.84px;font-size:12px;line-height:12px;color:#1e1e1e;"><span class="d">200110</span>-<span class="d">001</span>...</div>
<div class="t" style="left:324px;top:162.84px;font-size:12px;line-height:12px;color:#1e1e1e;">Accounts Payable - Other</div>
<div class="t" style="left:564px;top:162.84px;font-size:12px;line-height:12px;color:#1e1e1e;">USD</div>
<div class="t" style="left:345px;width:400px;text-align:right;top:162.84px;font-size:12px;line-height:12px;color:#1e1e1e;"><span class="d">0</span>,<span class="d">00</span></div>
<div class="t" style="left:48px;top:183.84px;font-size:12px;line-height:12px;color:#1e1e1e;"><span class="d">000975</span></div>
<div class="t" style="left:113px;top:183.84px;font-size:12px;line-height:12px;color:#1e1e1e;"><span class="d">140000</span>...</div>
<div class="t" style="left:177px;top:183.84px;font-size:12px;line-height:12px;color:#1e1e1e;"><span class="d">05</span>.<span class="d">02</span>.<span class="d">2</span>...</div>
<div class="t" style="left:241px;top:183.84px;font-size:12px;line-height:12px;color:#1e1e1e;"><span class="d">200110</span>-<span class="d">001</span>...</div>
<div class="t" style="left:324px;top:183.84px;font-size:12px;line-height:12px;color:#1e1e1e;">Accounts Payable - Other</div>
<div class="t" style="left:564px;top:183.84px;font-size:12px;line-height:12px;color:#1e1e1e;">USD</div>
<div class="t" style="left:345px;width:400px;text-align:right;top:183.84px;font-size:12px;line-height:12px;color:#1e1e1e;"><span class="d">0</span>,<span class="d">00</span></div>
<div class="t" style="left:406px;width:400px;text-align:right;top:120.84px;font-size:12px;line-height:12px;color:#1e1e1e;"><span class="d">50</span>,<span class="d">00</span></div>
<div class="t" style="left:406px;width:400px;text-align:right;top:141.84px;font-size:12px;line-height:12px;color:#1e1e1e;"><span class="d">70</span>,<span class="d">00</span></div>
<div class="t" style="left:466px;width:400px;text-align:right;top:162.84px;font-size:12px;line-height:12px;color:#1e1e1e;"><span class="d">50</span>,<span class="d">00</span></div>
<div class="t" style="left:466px;width:400px;text-align:right;top:183.84px;font-size:12px;line-height:12px;color:#1e1e1e;"><span class="d">70</span>,<span class="d">00</span></div>
<div class="t" style="left:11px;top:240.84px;font-size:12px;line-height:12px;color:#3c3c3c;">Description:</div>
<div class="r" style="left:84px;top:236px;width:374px;height:24px;box-sizing:border-box;border:1px solid #6e6e6e;background:#f0f0f0;"></div>
<div class="t" style="left:11px;top:267.84px;font-size:12px;line-height:12px;color:#3c3c3c;">Posting type:</div>
<div class="r" style="left:84px;top:262px;width:299px;height:24px;box-sizing:border-box;border:1px solid #6e6e6e;background:#f0f0f0;"></div>
<div class="t" style="left:89px;top:268.84px;font-size:12px;line-height:12px;color:#000;">Vendor balance</div>
<div class="t" style="left:470px;top:240.84px;font-size:12px;line-height:12px;color:#3c3c3c;">Account name:</div>
<div class="r" style="left:555px;top:236px;width:194px;height:24px;box-sizing:border-box;border:1px solid #6e6e6e;background:#f0f0f0;"></div>
<div class="t" style="left:561px;top:240.84px;font-size:12px;line-height:12px;color:#000;">Accounts Payable - Other</div>
<div class="r" style="left:11px;top:286px;width:918px;height:30px;background:linear-gradient(#8c949c 0,#8c949c 1px,#d0d8e0 1px,#e1e8f0 3px,#e1e8f0 100%);"></div>
<svg class="r" style="left:27px;top:296px" width="115" height="13" viewBox="0 0 115 13"><rect x="0" y="0" width="2" height="12" fill="#1462ee"/><path d="M2.8 6L12 0.3V11.7Z" fill="#0a92fb" stroke="#1462ee" stroke-width="0.5"/><path d="M26 6L38 0.3V11.7Z" fill="#0a92fb" stroke="#1462ee" stroke-width="0.5"/><g fill="#88acea"><rect x="52" y="0" width="2" height="1.5"/><rect x="55" y="0" width="4" height="1.5"/><rect x="60" y="0" width="4" height="1.5"/><rect x="52" y="3" width="2" height="2"/><rect x="55" y="3" width="4" height="2"/><rect x="60" y="3" width="4" height="2"/><rect x="52" y="6.5" width="2" height="2"/><rect x="55" y="6.5" width="4" height="2"/><rect x="60" y="6.5" width="4" height="2"/><rect x="52" y="10" width="2" height="1.5"/><rect x="55" y="10" width="4" height="1.5"/><rect x="60" y="10" width="4" height="1.5"/></g><path d="M78 0.3L90 6L78 11.7Z" fill="#0a92fb" stroke="#1462ee" stroke-width="0.5"/><path d="M102 0.3L111.2 6L102 11.7Z" fill="#0a92fb" stroke="#1462ee" stroke-width="0.5"/><rect x="112" y="0" width="2" height="12" fill="#1462ee"/></svg>
<div class="r" style="left:152px;top:291px;width:1px;height:22px;background:linear-gradient(#e1e8f0,#0c3a70 30%,#0c3a70 70%,#e1e8f0);"></div>
<div class="r" style="left:153px;top:291px;width:1px;height:22px;background:linear-gradient(#e1e8f0,#ffffff 30%,#ffffff 70%,#e1e8f0);"></div>
<div class="r" style="left:188px;top:291px;width:1px;height:22px;background:linear-gradient(#e1e8f0,#0c3a70 30%,#0c3a70 70%,#e1e8f0);"></div>
<div class="r" style="left:189px;top:291px;width:1px;height:22px;background:linear-gradient(#e1e8f0,#ffffff 30%,#ffffff 70%,#e1e8f0);"></div>
<div class="r" style="left:224px;top:291px;width:1px;height:22px;background:linear-gradient(#e1e8f0,#0c3a70 30%,#0c3a70 70%,#e1e8f0);"></div>
<div class="r" style="left:225px;top:291px;width:1px;height:22px;background:linear-gradient(#e1e8f0,#ffffff 30%,#ffffff 70%,#e1e8f0);"></div>
<div class="r" style="left:411px;top:291px;width:1px;height:22px;background:linear-gradient(#e1e8f0,#0c3a70 30%,#0c3a70 70%,#e1e8f0);"></div>
<div class="r" style="left:412px;top:291px;width:1px;height:22px;background:linear-gradient(#e1e8f0,#ffffff 30%,#ffffff 70%,#e1e8f0);"></div>
<div class="r" style="left:461px;top:291px;width:1px;height:22px;background:linear-gradient(#e1e8f0,#0c3a70 30%,#0c3a70 70%,#e1e8f0);"></div>
<div class="r" style="left:462px;top:291px;width:1px;height:22px;background:linear-gradient(#e1e8f0,#ffffff 30%,#ffffff 70%,#e1e8f0);"></div>
<div class="r" style="left:494.5px;top:291px;width:1px;height:22px;background:linear-gradient(#e1e8f0,#0c3a70 30%,#0c3a70 70%,#e1e8f0);"></div>
<div class="r" style="left:495.5px;top:291px;width:1px;height:22px;background:linear-gradient(#e1e8f0,#ffffff 30%,#ffffff 70%,#e1e8f0);"></div>
<div class="r" style="left:565.5px;top:291px;width:1px;height:22px;background:linear-gradient(#e1e8f0,#0c3a70 30%,#0c3a70 70%,#e1e8f0);"></div>
<div class="r" style="left:566.5px;top:291px;width:1px;height:22px;background:linear-gradient(#e1e8f0,#ffffff 30%,#ffffff 70%,#e1e8f0);"></div>
<div class="r" style="left:593.5px;top:291px;width:1px;height:22px;background:linear-gradient(#e1e8f0,#0c3a70 30%,#0c3a70 70%,#e1e8f0);"></div>
<div class="r" style="left:594.5px;top:291px;width:1px;height:22px;background:linear-gradient(#e1e8f0,#ffffff 30%,#ffffff 70%,#e1e8f0);"></div>
<div class="r" style="left:633.5px;top:291px;width:1px;height:22px;background:linear-gradient(#e1e8f0,#0c3a70 30%,#0c3a70 70%,#e1e8f0);"></div>
<div class="r" style="left:634.5px;top:291px;width:1px;height:22px;background:linear-gradient(#e1e8f0,#ffffff 30%,#ffffff 70%,#e1e8f0);"></div>
<div class="r" style="left:673.5px;top:291px;width:1px;height:22px;background:linear-gradient(#e1e8f0,#0c3a70 30%,#0c3a70 70%,#e1e8f0);"></div>
<div class="r" style="left:674.5px;top:291px;width:1px;height:22px;background:linear-gradient(#e1e8f0,#ffffff 30%,#ffffff 70%,#e1e8f0);"></div>
<div class="r" style="left:719.5px;top:291px;width:1px;height:22px;background:linear-gradient(#e1e8f0,#0c3a70 30%,#0c3a70 70%,#e1e8f0);"></div>
<div class="r" style="left:720.5px;top:291px;width:1px;height:22px;background:linear-gradient(#e1e8f0,#ffffff 30%,#ffffff 70%,#e1e8f0);"></div>
<div class="r" style="left:788.5px;top:291px;width:1px;height:22px;background:linear-gradient(#e1e8f0,#0c3a70 30%,#0c3a70 70%,#e1e8f0);"></div>
<div class="r" style="left:789.5px;top:291px;width:1px;height:22px;background:linear-gradient(#e1e8f0,#ffffff 30%,#ffffff 70%,#e1e8f0);"></div>
<div class="r" style="left:159px;top:290px;width:24px;height:24px;box-sizing:border-box;border:1.5px solid #d39a35;border-radius:3px;background:linear-gradient(#fde28a,#fedc6c);"></div>
<svg class="r" style="left:159px;top:290px" width="24" height="24" viewBox="0 0 24 24"><path d="M4 20L5.2 16.2L16.5 4.9L19.1 7.5L7.8 18.8Z" fill="#fbe79a" stroke="#2a2a2a" stroke-width="0.9"/><path d="M4 20L5.2 16.2L7.8 18.8Z" fill="#f0c090" stroke="#2a2a2a" stroke-width="0.6"/><path d="M4 20L4.6 18.2L5.8 19.4Z" fill="#111"/><path d="M15.5 5.9L18.1 8.5L19.1 7.5L16.5 4.9Z" fill="#40a060"/><path d="M16.5 4.9L19.1 7.5L20.2 6.4C20.5 6 20.5 5.5 20.1 5.1L18.9 3.9C18.5 3.5 18 3.5 17.6 3.8Z" fill="#d85a5a"/></svg>
<svg class="r" style="left:199px;top:293px" width="16" height="18" viewBox="0 0 16 18"><path d="M1.7 2.7H11L14.3 6V16.3H1.7Z" fill="#fdfdfd" stroke="#858585" stroke-width="1.3"/><path d="M11 2.7V6H14.3" fill="#e8e8e8" stroke="#a0a0a0" stroke-width="0.8"/><path d="M3.6 4.5V9.3A2.2 2.2 0 0 0 8 9.3V3.3A1.5 1.5 0 0 0 5 3.3V8.5" fill="none" stroke="#6a6a6a" stroke-width="1.2"/></svg>
<div class="t" style="left:231px;top:296.84px;font-size:12px;line-height:12px;color:#1e1e1e;">Unique key for generating gen...</div>
<svg class="r" style="left:421px;top:293px" width="18" height="18" viewBox="0 0 18 18"><defs><linearGradient id="bg1b" x1="0" y1="0" x2="1" y2="0"><stop offset="0" stop-color="#f0b010"/><stop offset="0.3" stop-color="#fff0a0"/><stop offset="0.55" stop-color="#f8c820"/><stop offset="1" stop-color="#b06a08"/></linearGradient></defs><circle cx="9" cy="1.9" r="1.1" fill="#e0a010"/><path d="M9 1.8C5.6 1.8 4.2 4.2 4.2 7.8V12.2L1.5 13.8V15.3H16.6V13.8L13.9 12.2V7.8C13.9 4.2 12.4 1.8 9 1.8Z" fill="url(#bg1b)"/><rect x="1.5" y="13.8" width="15.1" height="1.6" fill="#d89010"/><ellipse cx="8.6" cy="16.3" rx="1.9" ry="1.2" fill="#e0a018"/></svg>
<div class="t" style="left:438px;top:296.84px;font-size:12px;line-height:12px;color:#1e1e1e;">(<span class="d">1</span>)</div>
<div class="t" style="left:468px;top:296.84px;font-size:12px;line-height:12px;color:#1e1e1e;letter-spacing:-0.6px;">EUR</div>
<div class="t" style="left:501px;top:296.84px;font-size:12px;line-height:12px;color:#1e1e1e;letter-spacing:0px;">USR Model</div>
<div class="t" style="left:572px;top:296.84px;font-size:12px;line-height:12px;color:#1e1e1e;letter-spacing:0px;">usr</div>
<div class="t" style="left:600px;top:296.84px;font-size:12px;line-height:12px;color:#1e1e1e;letter-spacing:0.2px;">demf</div>
<div class="t" style="left:640px;top:296.84px;font-size:12px;line-height:12px;color:#1e1e1e;letter-spacing:0.3px;">initial</div>
<div class="t" style="left:681px;top:296.84px;font-size:12px;line-height:12px;color:#1e1e1e;letter-spacing:0px;">admin</div>
<div class="t" style="left:726px;top:296.84px;font-size:12px;line-height:12px;color:#1e1e1e;letter-spacing:0.3px;"><span class="d">11</span>.<span class="d">03</span>.<span class="d">2015</span></div>
<div class="t" style="left:794px;top:296.84px;font-size:12px;line-height:12px;color:#1e1e1e;letter-spacing:0.3px;"><span class="d">05</span>:<span class="d">10</span></div>
<div class="r" style="left:838px;top:290px;width:74px;height:24px;box-sizing:border-box;border:1px solid #6e6e6e;background:#e1e1e1;"></div>
<div class="t" style="left:860px;top:296.84px;font-size:12px;line-height:12px;color:#000;">Close</div>
<svg class="r" style="left:916px;top:303px" width="11" height="11" viewBox="0 0 11 11"><g fill="#a29a94"><rect x="9" y="0" width="2" height="2"/><rect x="6" y="3" width="2" height="2"/><rect x="9" y="3" width="2" height="2"/><rect x="3" y="6" width="2" height="2"/><rect x="6" y="6" width="2" height="2"/><rect x="9" y="6" width="2" height="2"/><rect x="0" y="9" width="2" height="2"/><rect x="3" y="9" width="2" height="2"/><rect x="6" y="9" width="2" height="2"/><rect x="9" y="9" width="2" height="2"/></g></svg>
</div>
</body></html>
